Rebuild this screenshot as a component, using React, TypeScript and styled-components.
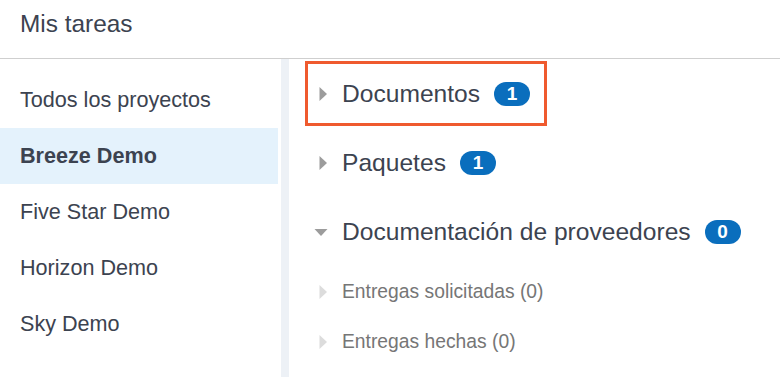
import React, {FC} from 'react';
import styled, {createGlobalStyle} from 'styled-components';

const GlobalStyle = createGlobalStyle`
  html, body {
    margin: 0;
    padding: 0;
    background: #fff;
    font-family: "Liberation Sans", Arial, sans-serif;
  }
`

const Page = styled.div`
  width: 780px;
  height: 377px;
  overflow: hidden;
  display: flex;
  flex-direction: column;
  color: #3c4350;
`

const TopBar = styled.div`
  height: 59px;
  box-sizing: border-box;
  border-bottom: 1px solid #cfcfcf;
  padding: 10px 0 0 20px;
  font-size: 24.4px;
  flex-shrink: 0;
`

const Body = styled.div`
  flex: 1;
  display: flex;
  min-height: 0;
`

const Sidebar = styled.div`
  width: 289px;
  box-sizing: border-box;
  padding: 13px 3px 0 0;
  border-right: 8px solid #edf1f6;
  flex-shrink: 0;
`

const ProjectRow = styled.div<{ active?: boolean }>`
  height: 56px;
  display: flex;
  align-items: center;
  padding-left: 20px;
  font-size: 21.6px;
  font-weight: ${p => p.active ? 700 : 400};
  background: ${p => p.active ? '#e4f2fc' : 'transparent'};
`

const Content = styled.div`
  flex: 1;
  padding-left: 16px;
  display: flex;
  flex-direction: column;
`

const Section = styled.div<{ marked?: boolean }>`
  display: flex;
  align-items: center;
  width: fit-content;
  box-sizing: border-box;
  height: 65px;
  margin: 2px 0;
  padding: 0 14px 0 6px;
  border: 3px solid ${p => p.marked ? '#ef5a2e' : 'transparent'};
  font-size: 24.6px;
`

const SubList = styled.div`
  padding-top: 1px;
`

const SubSection = styled.div`
  display: flex;
  align-items: center;
  height: 50px;
  padding-left: 9px;
  font-size: 19.3px;
  color: #767676;
`

const Caret = styled.span`
  width: 14px;
  height: 16px;
  margin-right: 14px;
  display: inline-flex;
  flex-shrink: 0;
`

const Badge = styled.span`
  margin-left: 14px;
  min-width: 36px;
  height: 24px;
  border-radius: 12px;
  background: #0a6ebd;
  color: #fff;
  font-size: 19px;
  font-weight: 700;
  display: inline-flex;
  align-items: center;
  justify-content: center;
`

const Arrow: FC<{ open?: boolean, light?: boolean }> = ({open, light}) => (
    <Caret>
        <svg width="14" height="16" viewBox="0 0 14 16">
            {open
                ? <path d="M0.5 5 L13.5 5 L7 12 Z" fill="#9c9c9c"/>
                : <path d="M5.5 1 L13 8 L5.5 15 Z" fill={light ? '#dcdcdc' : '#9c9c9c'}/>}
        </svg>
    </Caret>
);

const projects = ['Todos los proyectos', 'Breeze Demo', 'Five Star Demo', 'Horizon Demo', 'Sky Demo'];

const App: FC = () => {
    return (
        <Page>
            <GlobalStyle/>
            <TopBar>Mis tareas</TopBar>
            <Body>
                <Sidebar>
                    {projects.map(name => (
                        <ProjectRow key={name} active={name === 'Breeze Demo'}>{name}</ProjectRow>
                    ))}
                </Sidebar>
                <Content>
                    <Section marked>
                        <Arrow/>
                        Documentos
                        <Badge>1</Badge>
                    </Section>
                    <Section>
                        <Arrow/>
                        Paquetes
                        <Badge>1</Badge>
                    </Section>
                    <Section>
                        <Arrow open/>
                        Documentación de proveedores
                        <Badge>0</Badge>
                    </Section>
                    <SubList>
                        <SubSection>
                            <Arrow light/>
                            Entregas solicitadas (0)
                        </SubSection>
                        <SubSection>
                            <Arrow light/>
                            Entregas hechas (0)
                        </SubSection>
                    </SubList>
                </Content>
            </Body>
        </Page>
    );
};

export default App;
